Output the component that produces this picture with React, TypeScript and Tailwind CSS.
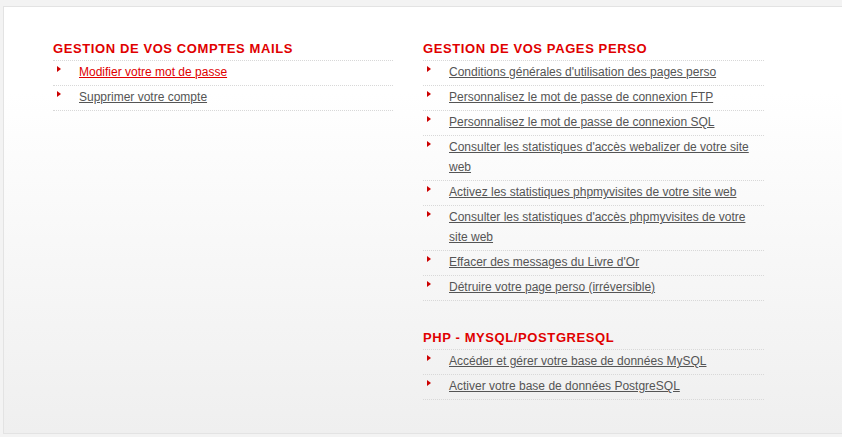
import React from 'react'

type Section = {
    title: string
    links: { label: string; active?: boolean }[]
}

const left: Section[] = [
    {
        title: "GESTION DE VOS COMPTES MAILS",
        links: [
            { label: "Modifier votre mot de passe", active: true },
            { label: "Supprimer votre compte" },
        ],
    },
]

const right: Section[] = [
    {
        title: "GESTION DE VOS PAGES PERSO",
        links: [
            { label: "Conditions générales d'utilisation des pages perso" },
            { label: "Personnalisez le mot de passe de connexion FTP" },
            { label: "Personnalisez le mot de passe de connexion SQL" },
            { label: "Consulter les statistiques d'accès webalizer de votre site web" },
            { label: "Activez les statistiques phpmyvisites de votre site web" },
            { label: "Consulter les statistiques d'accès phpmyvisites de votre site web" },
            { label: "Effacer des messages du Livre d'Or" },
            { label: "Détruire votre page perso (irréversible)" },
        ],
    },
    {
        title: "PHP - MYSQL/POSTGRESQL",
        links: [
            { label: "Accéder et gérer votre base de données MySQL" },
            { label: "Activer votre base de données PostgreSQL" },
        ],
    },
]

const Bullet = () => (
    <svg className="absolute left-[4px] top-[5px]" width="4" height="6" viewBox="0 0 4 6">
        <polygon points="0,0 4,3 0,6" fill="#cc0000" />
    </svg>
)

const Block = ({ section, first }: { section: Section; first: boolean }) => (
    <div className={first ? "" : "mt-[29px]"}>
        <h2 className="text-[13px] leading-[16px] font-bold tracking-[0.6px] text-[#e00000] pb-[3px] border-b border-dotted border-[#d8d8d8]">
            {section.title}
        </h2>
        <ul>
            {section.links.map((l) => (
                <li
                    key={l.label}
                    className="relative pl-[26px] pt-[1px] pb-[3px] leading-[20px] text-[12px] border-b border-dotted border-[#d8d8d8]"
                >
                    <Bullet />
                    <a
                        href="#"
                        className={`underline underline-offset-[1px] ${l.active ? "text-[#e00000]" : "text-[#555555]"}`}
                    >
                        {l.label}
                    </a>
                </li>
            ))}
        </ul>
    </div>
)

const App = () => {
    return (
        <div className="w-[842px] h-[437px] bg-[#f3f3f3] pt-[6px] pl-[3px] overflow-hidden font-['Liberation_Sans',Arial,sans-serif]">
            <div className="w-[860px] h-[428px] border border-[#e3e3e3] bg-gradient-to-b from-white from-20% to-[#efefef] pl-[49px] pt-[34px]">
                <div className="flex gap-[30px]">
                    <div className="w-[340px]">
                        {left.map((s, i) => (
                            <Block key={s.title} section={s} first={i === 0} />
                        ))}
                    </div>
                    <div className="w-[341px]">
                        {right.map((s, i) => (
                            <Block key={s.title} section={s} first={i === 0} />
                        ))}
                    </div>
                </div>
            </div>
        </div>
    )
}

export default App
